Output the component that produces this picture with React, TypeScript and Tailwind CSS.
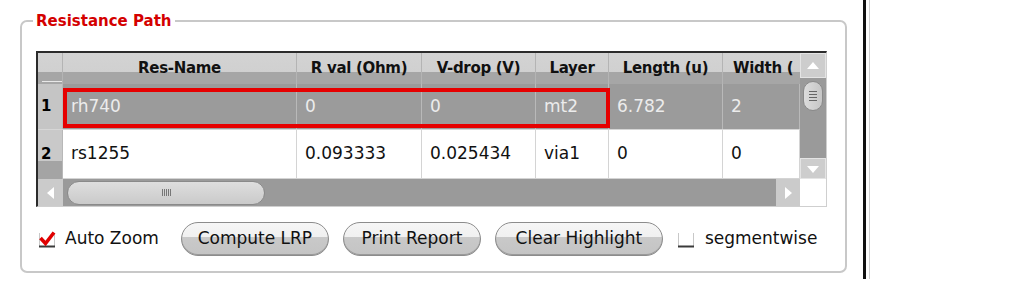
import React from "react";

const headers = ["Res-Name", "R val (Ohm)", "V-drop (V)", "Layer", "Length (u)"];

const rows = [
  ["rh740", "0", "0", "mt2", "6.782", "2"],
  ["rs1255", "0.093333", "0.025434", "via1", "0", "0"],
];

const gridCols = "grid grid-cols-[25px_234px_125px_114px_73px_114px_77px] w-[762px]";

const Arrow = ({ dir }: { dir: "up" | "down" | "left" | "right" }) => {
  const pts = {
    up: "2,11 8,4 14,11",
    down: "2,5 8,12 14,5",
    left: "11,2 4,8 11,14",
    right: "5,2 12,8 5,14",
  }[dir];
  return (
    <svg width="16" height="16" viewBox="0 0 16 16">
      <polygon points={pts} fill="#ffffff" />
    </svg>
  );
};

const CheckBox = ({ checked }: { checked?: boolean }) => (
  <svg width="18" height="17" viewBox="0 0 18 17">
    <path d="M1.5 2 V15.5 H16.5 V2" fill="none" stroke="#c8c8c8" strokeWidth="1" />
    <path d="M1 15.5 H17" stroke="#3a3a3a" strokeWidth="2" />
    {checked && (
      <path d="M2.5 7 L7.5 12.5 L16 1.5" fill="none" stroke="#e00000" strokeWidth="3.6" strokeLinejoin="miter" />
    )}
  </svg>
);

const PillButton = ({ label, width }: { label: string; width: string }) => (
  <button
    className={`${width} h-[34px] rounded-full border border-[#8c8c8c] bg-[linear-gradient(to_bottom,#f6f6f6_0%,#f0f0f0_44%,#c9c9c9_44%,#c4c4c4_100%)] text-[17px] text-[#111] flex items-center justify-center shadow-[inset_0_-1px_0_#9a9a9a]`}
  >
    {label}
  </button>
);

function ResTable() {
  return (
    <div className="w-[791px] flex border-t-2 border-l-2 border-t-[#2b2b2b] border-l-[#2b2b2b] border-r border-b border-r-[#cfcfcf] border-b-[#cfcfcf] bg-white">
      <div className="w-[762px] flex flex-col overflow-hidden">
        {/* header */}
        <div className={`${gridCols} h-[31px] bg-[linear-gradient(to_bottom,#d3d3d3_0%,#d0d0d0_61%,#a6a6a6_61%,#a6a6a6_100%)]`}>
          <div className="border-r border-[#b4b4b4] flex items-end justify-end pb-[2px]">
            <div className="w-[20px] h-px bg-[#e8e8e8]" />
          </div>
          {headers.map((h) => (
            <div
              key={h}
              className="border-r border-[#b4b4b4] flex items-center justify-center text-[15px] font-bold text-[#111] tracking-[-0.3px] whitespace-nowrap"
            >
              {h}
            </div>
          ))}
          <div className="flex items-center pl-[10px] text-[15px] font-bold text-[#111] tracking-[-0.3px] whitespace-nowrap">
            Width (
          </div>
        </div>
        {/* body */}
        <div className="relative">
          <div className={`${gridCols} h-[45px] bg-[#9b9b9b]`}>
            <div className="bg-[#c5c5c5] border-r border-[#b8b8b8] flex items-center pl-[3px] text-[15px] font-bold text-black">1</div>
            {rows[0].map((v, i) => (
              <div key={i} className="border-r border-[#b9b9b9] flex items-center pl-[8px] text-[17px] text-[#ececec]">
                {v}
              </div>
            ))}
          </div>
          <div className={`${gridCols} h-[50px] bg-white border-t border-[#d6d6d6]`}>
            <div className="bg-[linear-gradient(to_bottom,#c9c9c9_0%,#c9c9c9_64%,#a4a4a4_64%,#a4a4a4_100%)] border-r border-[#b8b8b8] flex items-center pl-[3px] text-[15px] font-bold text-black">
              2
            </div>
            {rows[1].map((v, i) => (
              <div key={i} className="border-r border-b border-[#d4d4d4] flex items-center pl-[8px] text-[17px] text-[#111]">
                {v}
              </div>
            ))}
          </div>
          {/* highlight around selected row */}
          <div className="absolute left-[25px] top-[4px] w-[547px] h-[40px] border-4 border-[#e60000] pointer-events-none" />
        </div>
        {/* horizontal scrollbar */}
        <div className="h-[27px] flex bg-[#9a9a9a]">
          <div className="w-[25px] bg-[#cbcbcb] flex items-center justify-center">
            <Arrow dir="left" />
          </div>
          <div className="flex-1 flex items-center pl-[4px]">
            <div className="w-[198px] h-[24px] rounded-full border border-[#8a8a8a] bg-[linear-gradient(to_bottom,#dedede,#cacaca)] flex items-center justify-center gap-[1px]">
              <div className="w-px h-[7px] bg-[#777]" />
              <div className="w-px h-[7px] bg-[#777]" />
              <div className="w-px h-[7px] bg-[#777]" />
              <div className="w-px h-[7px] bg-[#777]" />
              <div className="w-px h-[7px] bg-[#777]" />
            </div>
          </div>
          <div className="w-[24px] bg-[#cbcbcb] flex items-center justify-center">
            <Arrow dir="right" />
          </div>
        </div>
      </div>
      {/* vertical scrollbar */}
      <div className="w-[26px] flex flex-col">
        <div className="h-[126px] flex flex-col bg-[#9a9a9a]">
          <div className="h-[25px] bg-[#cdcdcd] border border-[#e4e4e4] flex items-center justify-center">
            <Arrow dir="up" />
          </div>
          <div className="flex-1 px-[3px] pt-[3px]">
            <div className="h-[30px] rounded-full border border-[#8a8a8a] bg-[linear-gradient(to_right,#dcdcdc,#c6c6c6)] flex flex-col items-center justify-center gap-[2px]">
              <div className="w-[8px] h-px bg-[#666]" />
              <div className="w-[8px] h-px bg-[#666]" />
              <div className="w-[8px] h-px bg-[#666]" />
              <div className="w-[8px] h-px bg-[#666]" />
            </div>
          </div>
          <div className="h-[21px] bg-[#cdcdcd] border border-[#e4e4e4] flex items-center justify-center">
            <Arrow dir="down" />
          </div>
        </div>
        <div className="flex-1 bg-white" />
      </div>
    </div>
  );
}

export default function App() {
  return (
    <div className="w-[1013px] h-[291px] bg-white flex items-start overflow-hidden font-['DejaVu_Sans',sans-serif]">
      <div className="w-[863px] pl-[20px] pt-[12px]">
        <fieldset className="w-[827px] h-[261px] border-2 border-[#c8c8c8] rounded-[7px] pl-[11px] pr-[14px] pt-[21px]">
          <legend className="px-[3px] text-[15px] leading-[18px] font-bold text-[#d40000]">Resistance Path</legend>
          <div className="ml-[3px]">
            <ResTable />
          </div>
          <div className="ml-[5px] mt-[15px] flex items-center">
            <CheckBox checked />
            <span className="ml-[9px] text-[17px] text-[#111]">Auto Zoom</span>
            <div className="ml-[22px] flex items-center gap-[14px]">
              <PillButton label="Compute LRP" width="w-[148px]" />
              <PillButton label="Print Report" width="w-[138px]" />
              <PillButton label="Clear Highlight" width="w-[168px]" />
            </div>
            <div className="ml-[14px]">
              <CheckBox />
            </div>
            <span className="ml-[10px] text-[17px] text-[#111]">segmentwise</span>
          </div>
        </fieldset>
      </div>
      <div className="w-[3px] h-[279px] bg-[#111]" />
      <div className="w-[3px]" />
      <div className="w-px h-[279px] bg-[#cfcfcf]" />
    </div>
  );
}
